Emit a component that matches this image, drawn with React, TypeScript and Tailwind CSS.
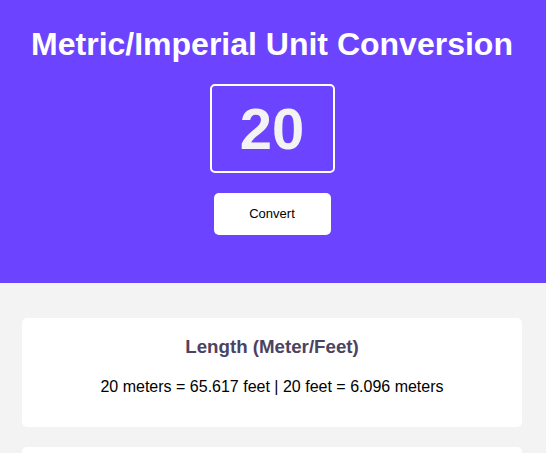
import { useState } from "react"

const conversions = [
  { title: "Length (Meter/Feet)", metric: "meters", imperial: "feet", factor: 3.28084 },
  { title: "Volume (Liters/Gallons)", metric: "liters", imperial: "gallons", factor: 0.264172 },
  { title: "Mass (Kilograms/Pounds)", metric: "kilos", imperial: "pounds", factor: 2.20462 },
]

const App = () => {
  const [value, setValue] = useState("20")
  const [num, setNum] = useState(20)

  return (
    <div className="min-h-screen bg-[#f3f3f3] font-['Liberation_Sans',Arial,sans-serif]">
      {/* Header */}
      <div className="bg-[#6c43ff] flex flex-col items-center pt-[25px] pb-[48px] pr-[2px]">
        <h1 className="text-[32px] leading-[38px] font-bold text-white">
          Metric/Imperial Unit Conversion
        </h1>
        <input
          value={value}
          onChange={(e) => setValue(e.target.value)}
          className="mt-[21px] w-[125px] h-[89px] bg-transparent border-2 border-white rounded-[5px] text-center text-[58px] font-bold text-[#f3f3f3] outline-none"
        />
        <button
          onClick={() => setNum(Number(value) || 0)}
          className="mt-[20px] w-[117px] h-[42px] bg-white rounded-[5px] text-[13px] text-black"
        >
          Convert
        </button>
      </div>

      {/* Results */}
      <div className="pl-[22px] pr-[24px] pt-[35px] flex flex-col gap-[20px]">
        {conversions.map((c) => (
          <div key={c.title} className="bg-white rounded-[5px] flex flex-col items-center pt-[18px] pb-[31px]">
            <h2 className="text-[18.72px] leading-[21px] font-bold text-[#4b4361]">{c.title}</h2>
            <p className="mt-[21px] text-[16px] leading-[18px] text-black">
              {num} {c.metric} = {(num * c.factor).toFixed(3)} {c.imperial} | {num} {c.imperial} ={" "}
              {(num / c.factor).toFixed(3)} {c.metric}
            </p>
          </div>
        ))}
      </div>
    </div>
  )
}

export default App
